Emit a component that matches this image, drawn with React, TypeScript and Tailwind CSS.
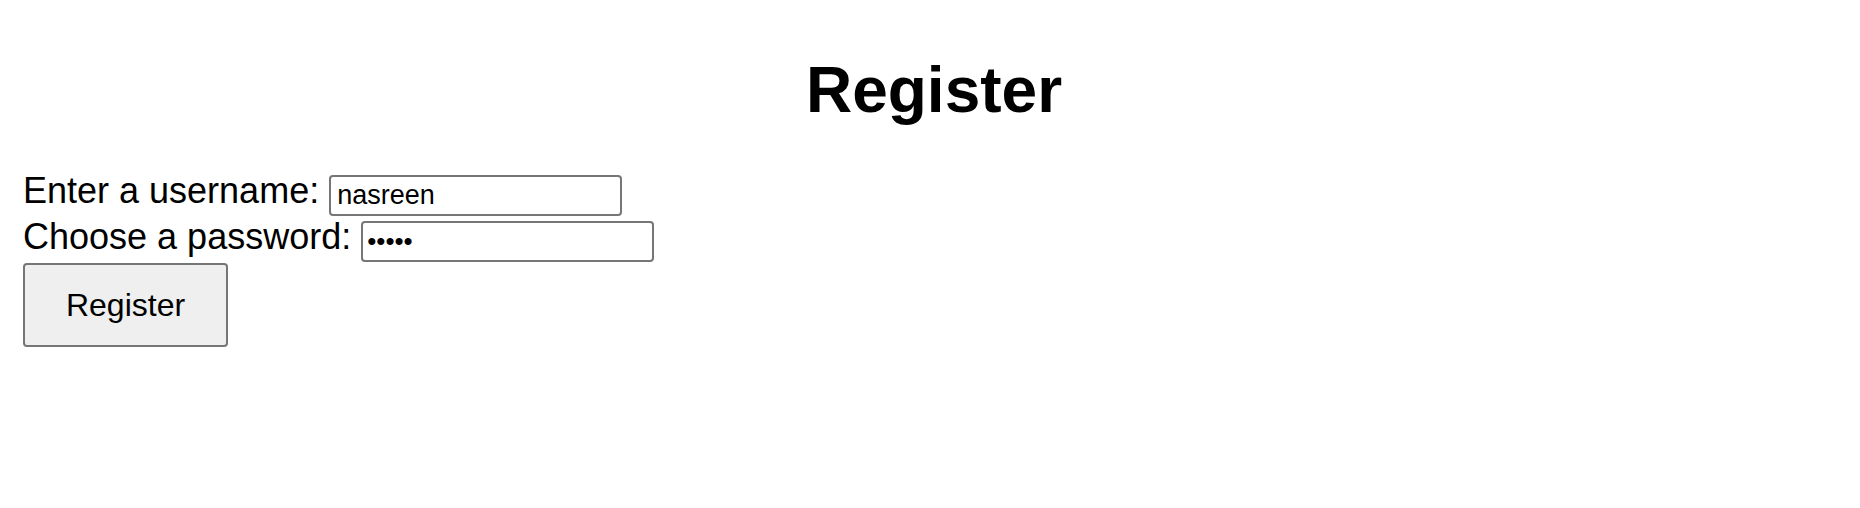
import { useState } from "react"

export default function App() {
  const [username, setUsername] = useState("nasreen")
  const [password, setPassword] = useState("abcde")

  return (
    <div className="min-h-[508px] bg-white pl-[23px] pr-[15px] text-black font-['Liberation_Sans',Arial,sans-serif]">
      <h1 className="pt-[58px] text-center text-[64px] font-bold leading-none">Register</h1>

      <form className="mt-[47px]" onSubmit={(e) => e.preventDefault()}>
        <div className="flex h-[46px] items-start">
          <label htmlFor="username" className="pt-[2px] text-[36px] leading-[40px] whitespace-pre">Enter a username: </label>
          <input
            id="username"
            type="text"
            value={username}
            onChange={(e) => setUsername(e.target.value)}
            className="mt-[6px] h-[41px] w-[293px] rounded-[4px] border-2 border-[#767676] px-[6px] text-[27px] outline-none"
          />
        </div>
        <div className="flex h-[46px] items-start">
          <label htmlFor="password" className="pt-[2px] text-[36px] leading-[40px] whitespace-pre">Choose a password: </label>
          <input
            id="password"
            type="password"
            value={password}
            onChange={(e) => setPassword(e.target.value)}
            className="mt-[6px] h-[41px] w-[293px] rounded-[4px] border-2 border-[#767676] px-[4px] text-[26px] outline-none"
          />
        </div>
        <button
          type="submit"
          className="mt-[2px] h-[84px] w-[205px] rounded-[4px] border-2 border-[#767676] bg-[#efefef] text-[32px]"
        >
          Register
        </button>
      </form>
    </div>
  )
}
